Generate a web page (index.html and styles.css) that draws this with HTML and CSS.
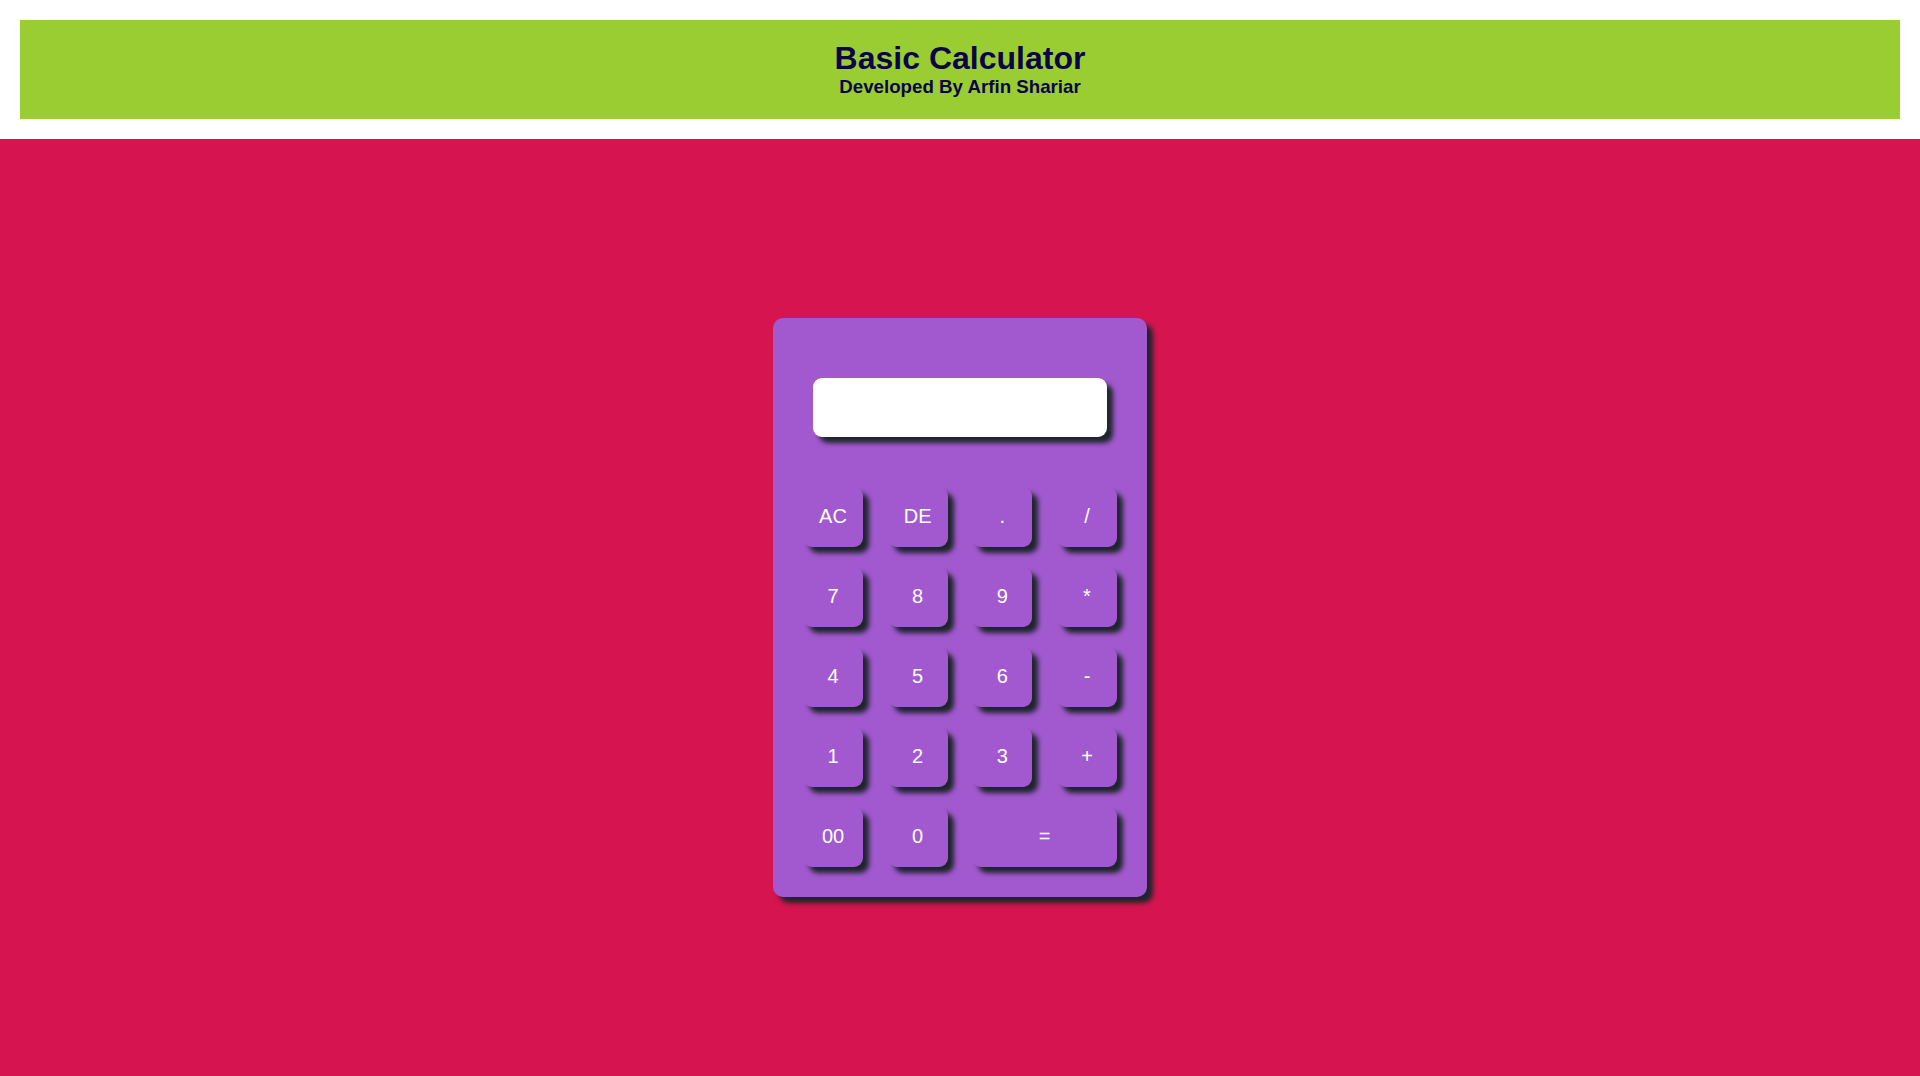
FILE: index.html
```html
<!DOCTYPE html>
<html lang="en">
<head>
<meta charset="UTF-8">
<title>Basic Calculator</title>
<link rel="stylesheet" href="styles.css">
</head>
<body>
<header class="header">
  <h1 class="title">Basic Calculator</h1>
  <h3 class="subtitle">Developed By Arfin Shariar</h3>
</header>
<main class="stage">
  <div class="calculator">
    <input class="display" type="text" readonly>
    <div class="keys">
      <button class="key">AC</button>
      <button class="key">DE</button>
      <button class="key">.</button>
      <button class="key">/</button>
      <button class="key">7</button>
      <button class="key">8</button>
      <button class="key">9</button>
      <button class="key">*</button>
      <button class="key">4</button>
      <button class="key">5</button>
      <button class="key">6</button>
      <button class="key">-</button>
      <button class="key">1</button>
      <button class="key">2</button>
      <button class="key">3</button>
      <button class="key">+</button>
      <button class="key">00</button>
      <button class="key">0</button>
      <button class="key key-wide">=</button>
    </div>
  </div>
</main>
</body>
</html>
```
FILE: styles.css
```css
html, body {
  margin: 0;
  padding: 0;
  height: 100%;
}

body {
  display: flex;
  flex-direction: column;
  font-family: "Liberation Sans", Arial, sans-serif;
  background: #ffffff;
}

.header {
  margin: 20px;
  padding: 20px 0 21px;
  background: #9acd32;
  text-align: center;
  color: #0b0548;
}

.title {
  margin: 0;
  font-size: 32px;
  line-height: 36px;
  font-weight: bold;
}

.subtitle {
  margin: 0;
  font-size: 18.72px;
  line-height: 22px;
  font-weight: bold;
}

.stage {
  flex: 1;
  background: #d61450;
  display: flex;
  align-items: center;
  justify-content: center;
}

.calculator {
  width: 374px;
  box-sizing: border-box;
  padding: 60px 30px 30px;
  background: #a259cf;
  border-radius: 10px;
  box-shadow: 6px 6px 5px #1e252b;
  display: flex;
  flex-direction: column;
  align-items: center;
}

.display {
  width: 294px;
  height: 59px;
  box-sizing: border-box;
  border: none;
  outline: none;
  border-radius: 9px;
  background: #ffffff;
  box-shadow: 6px 6px 5px #1e252b;
  margin-bottom: 50px;
  font-family: "Liberation Sans", Arial, sans-serif;
  font-size: 24px;
  padding: 0 12px;
  text-align: right;
}

.keys {
  width: 314px;
  display: grid;
  grid-template-columns: repeat(4, 60px);
  grid-auto-rows: 60px;
  justify-content: space-between;
  row-gap: 20px;
}

.key {
  border: none;
  border-radius: 9px;
  background: #a259cf;
  color: #ffffff;
  font-family: "Liberation Sans", Arial, sans-serif;
  font-size: 20px;
  line-height: 20px;
  box-shadow: 6px 6px 5px #1e252b;
  padding: 0 0 2px;
  cursor: pointer;
}

.key-wide {
  grid-column: span 2;
}
```
